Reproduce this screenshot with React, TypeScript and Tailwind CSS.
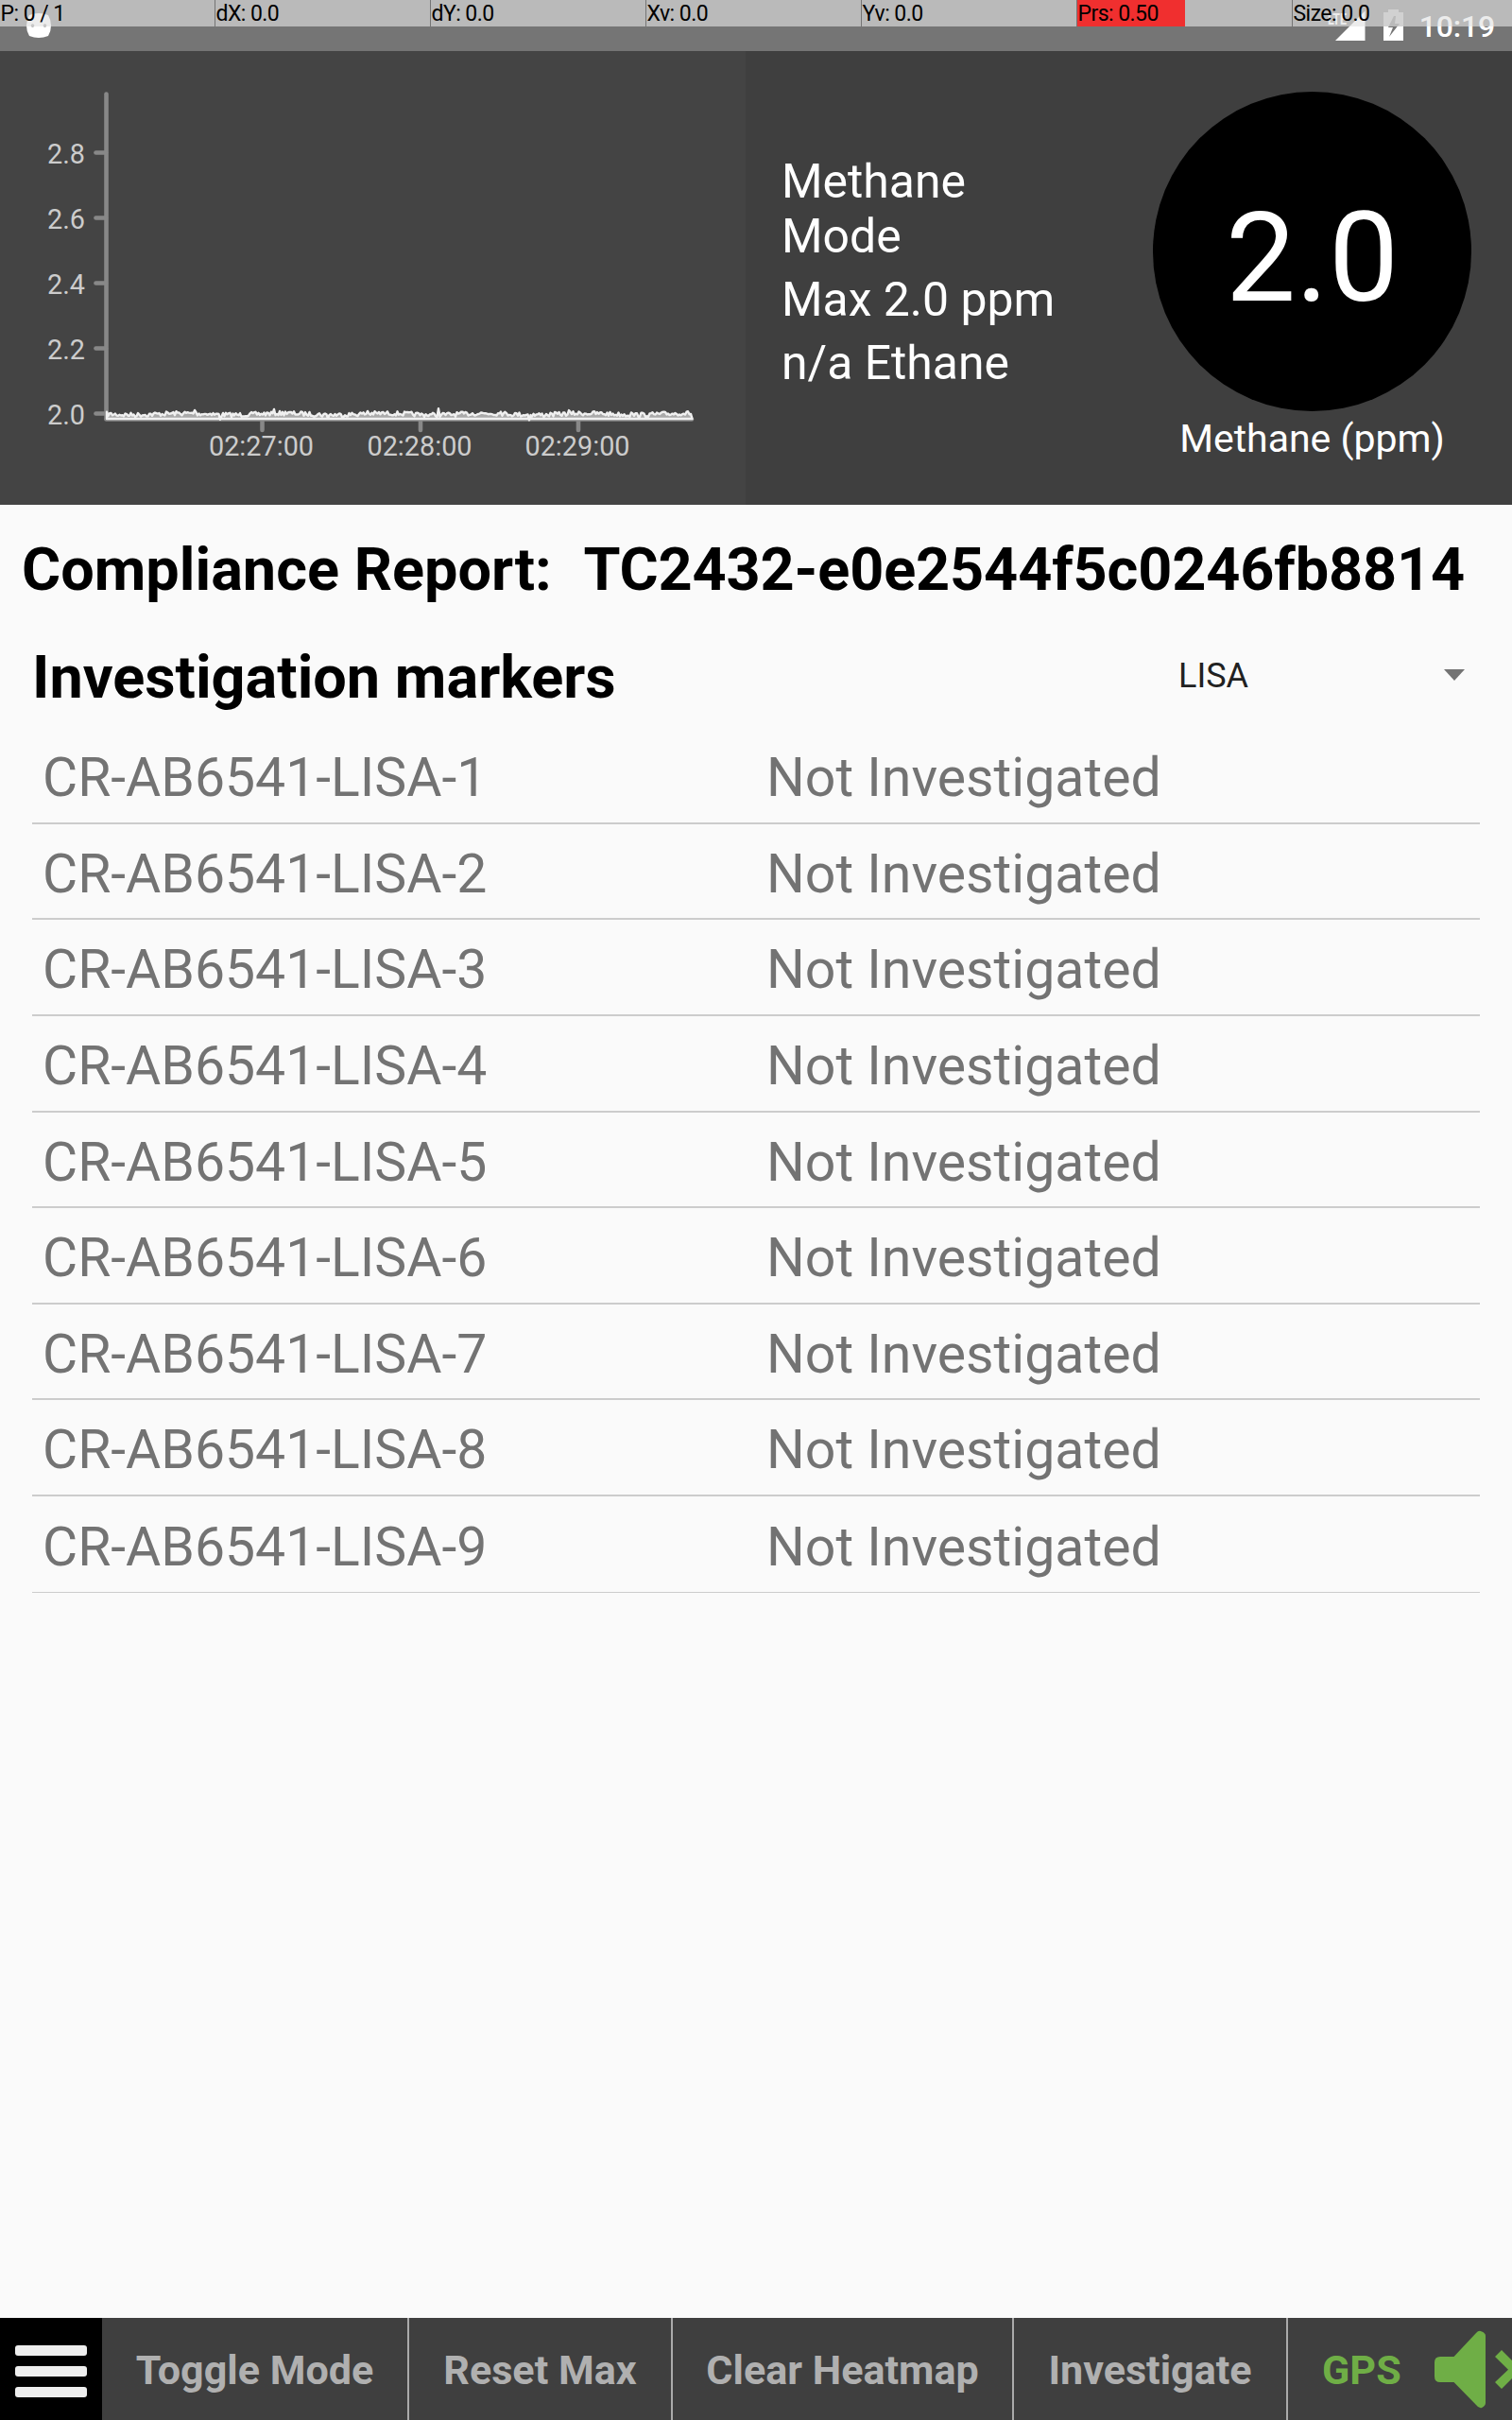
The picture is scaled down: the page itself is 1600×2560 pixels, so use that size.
import React from "react";

const metrics = [
  { label: "P: 0 / 1" },
  { label: "dX: 0.0" },
  { label: "dY: 0.0" },
  { label: "Xv: 0.0" },
  { label: "Yv: 0.0" },
  { label: "Prs: 0.50", level: true },
  { label: "Size: 0.0" },
];

const yTicks = [
  { v: "2.8", y: 107.5 },
  { v: "2.6", y: 176.5 },
  { v: "2.4", y: 245.5 },
  { v: "2.2", y: 314.5 },
  { v: "2.0", y: 383.5 },
];

const xTicks = [
  { v: "02:27:00", x: 277.5 },
  { v: "02:28:00", x: 445 },
  { v: "02:29:00", x: 612 },
];

const spikes: Record<number, number> = { 93: -4, 108: -2, 120: 4, 177: -2, 190: -2, 234: 2, 276: -3, 352: -5, 377: -3, 418: -4, 448: 4, 489: -2, 555: -4 };

function tracePoints() {
  const pts: string[] = [];
  let seed = 7;
  for (let i = 0; i <= 619; i += 1.5) {
    seed = (seed * 16807) % 2147483647;
    const noise = (seed / 2147483647 - 0.5) * 4.6;
    const drift = Math.sin(i / 17) * 0.8;
    const spike = spikes[i] ?? spikes[i + 1] ?? 0;
    pts.push(`${113 + i},${(384 + noise + drift + spike).toFixed(1)}`);
  }
  return pts.join(" ");
}

const trace = tracePoints();

function StatusBar() {
  return (
    <header className="relative h-[54px] bg-[#757575]">
      <div className="flex h-full items-start">
        <svg className="ml-[28px] mt-[13px] h-[27px] w-[26px]" viewBox="0 0 26 27">
          <path d="M3 3Q13-1 23 3Q26 8 26 14Q26 20 23 25Q13 29 3 25Q0 20 0 14Q0 8 3 3Z" fill="#fff" />
          <circle cx="6.500" cy="14" r="1.800" fill="#999" />
          <circle cx="19.500" cy="14" r="1.800" fill="#999" />
        </svg>
        <div className="ml-auto flex items-start text-white">
          <svg className="mt-[10px] h-[33px] w-[40px]" viewBox="0 0 40 33">
            <path d="M8 33L39.500 1.500V33Z" fill="#fff" />
            <text x="0" y="16" fill="#fff" fontSize="17" fontWeight="700" fontFamily="Roboto" textLength="20" lengthAdjust="spacingAndGlyphs">LTE</text>
          </svg>
          <svg className="ml-[19px] mt-[10px] h-[33px] w-[21px]" viewBox="0 0 21 33">
            <path d="M5 0H16V3H21V18H0V3H5Z" fill="#fff" fillOpacity="0.450" />
            <path d="M0 18H21V33H0Z" fill="#fff" />
            <path d="M11 7L5 19H10L6 29L17 15H12L13 7Z" fill="#757575" />
          </svg>
          <span className="ml-[17px] mr-[18px] mt-[12px] text-[32px] leading-[32px] font-medium tracking-[-0.200px]">10:19</span>
        </div>
      </div>
      <div className="absolute inset-x-0 top-0 flex h-[28px]">
        {metrics.map((m, i) => (
          <div key={m.label} className={i < 6 ? "relative h-[28px] w-[228px] shrink-0 border-r border-[#757575] bg-[#e1e1e1a3] bg-clip-padding" : "relative h-[28px] grow bg-[#e1e1e1a3]"}>
            {m.level && <div className="absolute left-0 top-0 h-[28px] w-[114px] bg-[#f02f2f]" />}
            <span className="absolute left-[0.500px] top-[1px] text-[23px] leading-[28px] tracking-[-0.550px] whitespace-pre text-black">{m.label}</span>
          </div>
        ))}
      </div>
    </header>
  );
}

function Chart() {
  return (
    <svg className="h-[480px] w-[789px] shrink-0 bg-[#444444]" viewBox="0 0 789 480" fontFamily="Roboto, sans-serif">
      <g stroke="#888888" strokeWidth="4.600" strokeLinecap="round">
        <path d="M112.500 45.500V389" />
        <path d="M112.500 389.500H732" />
        {yTicks.map((t) => (
          <path key={t.v} d={`M101.500 ${t.y}H112`} />
        ))}
        {xTicks.map((t) => (
          <path key={t.v} d={`M${t.x} 391V401`} />
        ))}
      </g>
      <polygon points={`113,389 ${trace} 732.5,389`} fill="#aaaaaa" stroke="#f0f0f0" strokeWidth="2.400" strokeLinejoin="round" />
      <g fill="#cccccc" fontSize="28.800">
        {yTicks.map((t) => (
          <text key={t.v} x="90" y={t.y + 11.5} textAnchor="end">{t.v}</text>
        ))}
        {xTicks.map((t) => (
          <text key={t.v} x={t.x - 1} y="427.500" textAnchor="middle">{t.v}</text>
        ))}
      </g>
    </svg>
  );
}

function Readings() {
  return (
    <section className="flex h-[480px] bg-[#3f3f3f] text-white">
      <Chart />
      <div className="ml-[38px] w-[393px] pt-[109px] text-[49.900px] leading-[58px]">
        <p className="w-[260px]">Methane Mode</p>
        <p className="mt-[9px] whitespace-nowrap">Max 2.0 ppm</p>
        <p className="mt-[9px]">n/a Ethane</p>
      </div>
      <div className="flex w-[337px] flex-col items-center pt-[43px]">
        <div className="flex h-[338px] w-[337px] shrink-0 items-center justify-center rounded-full bg-black pt-[13px] text-[132px] leading-none">2.0</div>
        <p className="mt-[5px] text-[41px] leading-[48px] whitespace-nowrap">Methane (ppm)</p>
      </div>
    </section>
  );
}

function Markers() {
  return (
    <main className="grow px-[34px]">
      <h1 className="-ml-[11px] flex pt-[31px] text-[63px] leading-[75px] font-bold whitespace-pre">
        <span>Compliance Report: </span>
        <span className="ml-[18px] tracking-[-0.130px]">TC2432-e0e2544f5c0246fb8814</span>
      </h1>
      <div className="mt-[39px] flex h-[75px] items-center">
        <h2 className="text-[63px] leading-[75px] font-bold">Investigation markers</h2>
        <button className="mr-[16px] mb-[3px] ml-auto flex w-[303px] items-center justify-between text-[36px] leading-[42px] text-[#212121]">
          LISA
          <svg className="mt-[-2px] h-[12px] w-[22px]" viewBox="0 0 22 12"><path d="M0 0H22L11 12Z" fill="#737373" /></svg>
        </button>
      </div>
      <ul className="mt-[16px] text-[57.100px] text-[#737373]">
        {[1, 2, 3, 4, 5, 6, 7, 8, 9].map((n) => (
          <li key={n} className="grid h-[101.630px] grid-cols-2 items-center border-b-2 border-[#cccccc] pt-[5.500px] leading-[67px] last:border-b">
            <span className="pl-[11px]">CR-AB6541-LISA-{n}</span>
            <span className="pl-[11px] text-[57.200px]">Not Investigated</span>
          </li>
        ))}
      </ul>
    </main>
  );
}

function BottomBar() {
  const cell = "flex h-full items-center justify-center border-r-2 border-[#aaaaaa] pt-[5px]";
  return (
    <nav className="flex h-[108px] items-stretch overflow-hidden bg-[#3f3f3f] text-[43.100px] font-bold whitespace-nowrap text-[#b0b0b0]">
      <button className="flex w-[108px] shrink-0 flex-col items-center justify-center gap-[10.500px] bg-black pt-[5px]">
        <span className="h-[11.500px] w-[76px] rounded-[3px] bg-[#eeeeee]" />
        <span className="h-[11.500px] w-[76px] rounded-[3px] bg-[#eeeeee]" />
        <span className="h-[11.500px] w-[76px] rounded-[3px] bg-[#eeeeee]" />
      </button>
      <div className={`${cell} w-[325px] shrink-0`}>Toggle Mode</div>
      <div className={`${cell} w-[279px] shrink-0`}>Reset Max</div>
      <div className={`${cell} w-[361px] shrink-0`}>Clear Heatmap</div>
      <div className={`${cell} w-[290px] shrink-0`}>Investigate</div>
      <div className="flex w-[237px] shrink-0 items-center pl-[36px] text-[#6fae46]">
        <span className="pt-[5px]">GPS</span>
        <svg className="ml-auto h-[108px] w-[82px] shrink-0" viewBox="0 0 82 108" fill="#6fae46">
          <path d="M6 41H20.500L44 16Q47 12.500 50 14.500Q54 16 54 19V90Q54 93 50 95Q47 96 44 92L20.500 68H6Q0 68 0 62V47Q0 41 6 41Z" />
          <path d="M71 34L82 45V64L71 75L64 68L78 54.700L64 41Z" />
        </svg>
      </div>
    </nav>
  );
}

export default function App() {
  return (
    <div className="flex h-[2560px] w-[1600px] flex-col overflow-hidden bg-[#fafafa] font-[Roboto,sans-serif]">
      <StatusBar />
      <Readings />
      <Markers />
      <BottomBar />
    </div>
  );
}
